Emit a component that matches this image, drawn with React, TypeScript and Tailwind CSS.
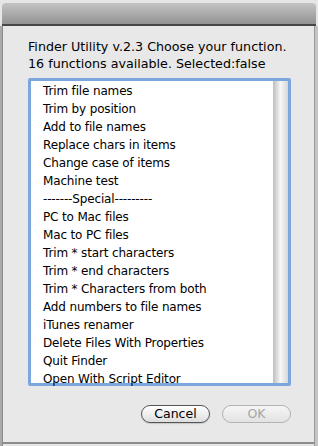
const items = [
  "Trim file names",
  "Trim by position",
  "Add to file names",
  "Replace chars in items",
  "Change case of items",
  "Machine test",
  "-------Special---------",
  "PC to Mac files",
  "Mac to PC files",
  "Trim * start characters",
  "Trim * end characters",
  "Trim * Characters from both",
  "Add numbers to file names",
  "iTunes renamer",
  "Delete Files With Properties",
  "Quit Finder",
  "Open With Script Editor",
]

export default function App() {
  return (
    <div className="w-[318px] h-[446px] overflow-hidden bg-[#e6e6e6] flex flex-col font-['DejaVu_Sans',sans-serif] text-black">
      {/* window toolbar behind the sheet */}
      <div className="pt-[3px] px-[2px] shrink-0">
        <div className="h-[21px] rounded-t-[4px] bg-[#a8a8a8] bg-linear-to-b from-[#c4c4c4] to-[#939393]" />
        <div className="h-[2px] bg-[#474747]" />
      </div>
      <div className="flex flex-1 min-h-0">
        <div className="w-[3px] bg-[#a9a9a9] border-r border-[#8a8a8a]" />
        <div className="flex-1 bg-[#e8e8e8] flex flex-col pl-[25px] pr-[23px] pt-[12px] border-b-2 border-[#8c8c8c] mb-[2px]">
          <div className="text-[12.7px] leading-[17px]">
            <div>Finder Utility v.2.3 Choose your function.</div>
            <div>16 functions available. Selected:false</div>
          </div>
          <div className="mt-[6px] h-[308px] border-[3px] border-[#7ca6de] rounded-[2px] bg-white flex">
            <div className="flex-1 pl-[12px] pt-[1px] text-[12px] leading-[18px] tracking-[-0.15px]">
              {items.map((t) => (
                <div key={t}>{t}</div>
              ))}
            </div>
            <div className="w-[15px] bg-linear-to-r from-[#bdbdbd] via-[#f7f7f7] to-[#d8d8d8]" />
          </div>
          <div className="flex justify-end gap-[12px] mt-[19px]">
            <button className="w-[69px] h-[18px] rounded-full border border-[#555] bg-linear-to-b from-white to-[#dedede] text-[12.5px] leading-[16px] shadow-[0_1px_1px_rgba(0,0,0,0.15)]">
              Cancel
            </button>
            <button className="w-[69px] h-[18px] rounded-full border border-[#b3b3b3] bg-linear-to-b from-[#f6f6f6] to-[#e2e2e2] text-[12.5px] leading-[16px] text-[#a5a5a5]">
              OK
            </button>
          </div>
        </div>
        <div className="w-[4px] bg-[#c4c4c4] border-l border-[#9a9a9a]" />
      </div>
    </div>
  )
}
